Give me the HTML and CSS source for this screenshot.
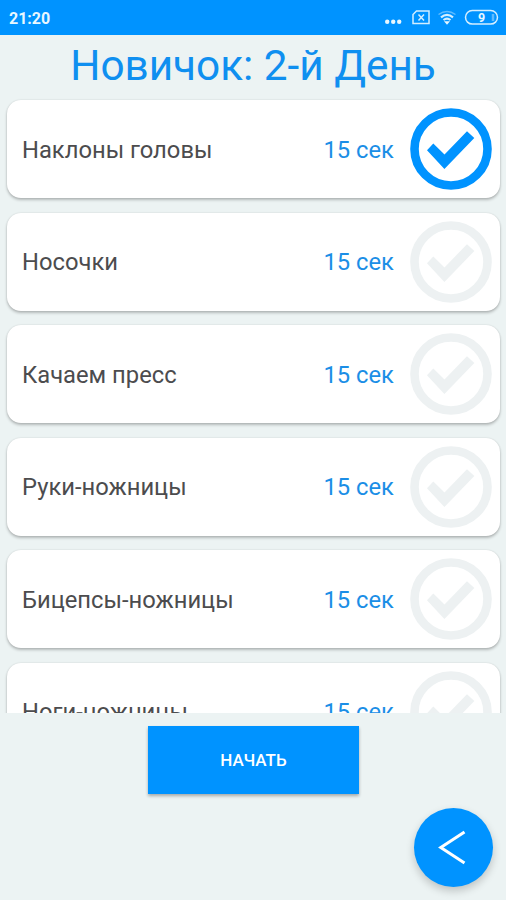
FILE: index.html
```html
<!DOCTYPE html>
<html lang="ru">
<head>
<meta charset="utf-8">
<title>Новичок: 2-й День</title>
<link rel="stylesheet" href="styles.css">
</head>
<body>
<svg width="0" height="0" class="defs">
  <symbol id="check" viewBox="0 0 82 82">
    <circle cx="41" cy="41" r="36.5" fill="none" stroke="currentColor" stroke-width="8.6"/>
    <path fill="currentColor" d="M17 42.3 23.3 35.5 34.5 46.5 57 23.2 64.3 30 34.4 61Z"/>
  </symbol>
</svg>
<div class="screen">
  <header class="status">
    <span class="clock">21:20</span>
    <svg class="status-icons" width="116" height="20" viewBox="0 0 116 20" fill="none" stroke="#d3eeff" stroke-width="1.5">
      <g fill="#e8f7ff" stroke="none"><circle cx="4.2" cy="13.8" r="2.2"/><circle cx="10.2" cy="13.8" r="2.2"/><circle cx="16.2" cy="13.8" r="2.2"/></g>
      <path d="M33.5 3H46V15.600H30V6.500Z"/>
      <path d="M35.500 6.500 41 12.500M41 6.500 35.500 12.500"/>
      <path d="M55.500 6.500Q64 .5 72.500 6.500" opacity=".45"/>
      <path d="M58 9.300Q64 4.600 70 9.300M60.500 12Q64 9.300 67.500 12" stroke-width="2.2"/>
      <path d="M61 13.300H67L64 16.800Z" fill="#e8f7ff" stroke="none"/>
      <rect x="82.500" y="2.500" width="32" height="13.600" rx="6.800"/>
      <path d="M110 6v7" opacity=".45" stroke-width="2.5"/>
      <text x="98.500" y="13.600" class="battery">9</text>
    </svg>
  </header>
  <h1>Новичок: 2-й День</h1>
  <main class="list">
    <div class="card done"><span class="name">Наклоны головы</span><span class="time">15 сек</span><svg class="check"><use href="#check"/></svg></div>
    <div class="card"><span class="name">Носочки</span><span class="time">15 сек</span><svg class="check"><use href="#check"/></svg></div>
    <div class="card"><span class="name">Качаем пресс</span><span class="time">15 сек</span><svg class="check"><use href="#check"/></svg></div>
    <div class="card"><span class="name">Руки-ножницы</span><span class="time">15 сек</span><svg class="check"><use href="#check"/></svg></div>
    <div class="card"><span class="name">Бицепсы-ножницы</span><span class="time">15 сек</span><svg class="check"><use href="#check"/></svg></div>
    <div class="card"><span class="name">Ноги-ножницы</span><span class="time">15 сек</span><svg class="check"><use href="#check"/></svg></div>
  </main>
  <footer>
    <button class="start">НАЧАТЬ</button>
    <button class="back" aria-label="Назад">
      <svg width="79" height="79" viewBox="0 0 79 79" fill="none" stroke="#fff" stroke-width="3"><path d="M50.500 24 26.800 39.500 50.500 55"/></svg>
    </button>
  </footer>
</div>
</body>
</html>
```
FILE: styles.css
```css
* { box-sizing: border-box; }
body { margin: 0; background: #ecf3f3; font-family: Roboto, sans-serif; }
.defs { display: block; }
.screen { width: 506px; height: 900px; display: flex; flex-direction: column; overflow: hidden; }
.status { height: 35px; flex: none; background: #0093ff; color: #e8f7ff; display: flex; align-items: center; justify-content: space-between; padding: 1px 7px 0 9px; }
.clock { font-size: 16px; font-weight: 700; line-height: 20px; padding-top: 2px; }
.battery { font: 700 12.500px Roboto, sans-serif; fill: #e8f7ff; stroke: none; text-anchor: middle; }
h1 { margin: 0; height: 57px; flex: none; padding-top: 6px; font-size: 42.300px; line-height: 50px; font-weight: 400; color: #0f8ff0; text-align: center; white-space: nowrap; }
.list { height: 620.500px; flex: none; padding: 8px 6px 0 7px; overflow: hidden; display: flex; flex-direction: column; gap: 14.600px; }
.card { height: 98px; flex: none; background: #fff; border-radius: 14px; box-shadow: 0 2px 3px rgba(0,0,0,.24), 0 0 2px rgba(0,0,0,.12); display: flex; align-items: center; padding: 0 8.500px 0 15px; color: #edf1f2; }
.card.done { color: #0093ff; }
.name { flex: 1; font-size: 23.750px; line-height: 32px; color: #4c4c4e; padding-top: 1px; }
.time { width: 86px; font-size: 23.750px; line-height: 32px; color: #1b8ee6; padding-top: 1px; white-space: nowrap; }
.check { width: 82px; height: 82px; flex: none; }
footer { flex: 1; display: flex; flex-direction: column; align-items: center; padding-top: 13.500px; }
button { border: 0; padding: 0; background: #0093ff; color: #fff; font-family: inherit; }
.start { width: 211px; height: 68px; flex: none; font-size: 17px; font-weight: 500; margin-left: 1px; box-shadow: 0 2px 3px rgba(0,0,0,.3); }
.back { width: 79px; height: 79px; flex: none; border-radius: 50%; align-self: flex-end; margin: 13.500px 13px 0 0; box-shadow: 0 4px 8px rgba(0,0,0,.2); }
.back svg { display: block; }
```
